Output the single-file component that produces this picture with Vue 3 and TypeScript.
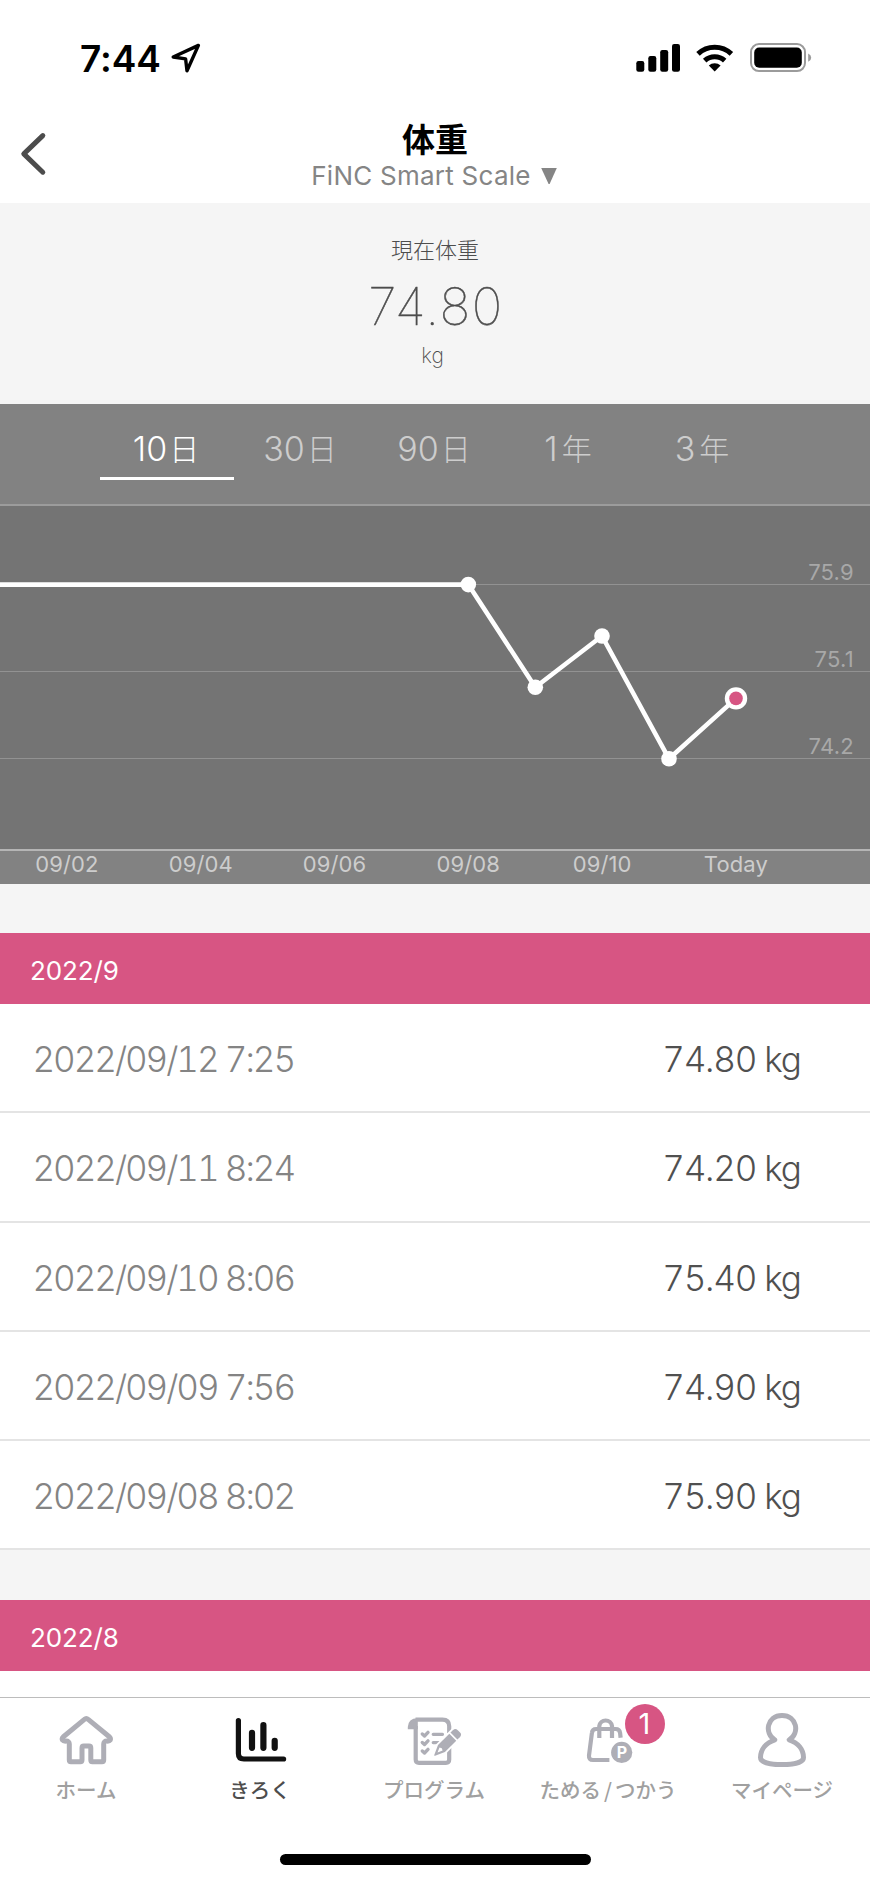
<script setup lang="ts">
interface Point { x: number; y: number }
interface Entry { date: string; weight: string }

const ranges: { num: string; unit: string }[] = [
  { num: '10', unit: '日' },
  { num: '30', unit: '日' },
  { num: '90', unit: '日' },
  { num: '1', unit: '年' },
  { num: '3', unit: '年' },
]
const gridLines = [
  { y: 79, label: '75.9' },
  { y: 166, label: '75.1' },
  { y: 253, label: '74.2' },
]
const points: Point[] = [
  { x: 468.3, y: 78.6 },
  { x: 535.3, y: 181.2 },
  { x: 602, y: 130 },
  { x: 669, y: 252.8 },
]
const today: Point = { x: 736, y: 192.4 }
const line = [{ x: -5, y: 78.6 }, ...points, today].map((p) => `${p.x},${p.y}`).join(' ')
const days = ['09/02', '09/04', '09/06', '09/08', '09/10', 'Today']
const entries: Entry[] = [
  { date: '2022/09/12 7:25', weight: '74.80 kg' },
  { date: '2022/09/11 8:24', weight: '74.20 kg' },
  { date: '2022/09/10 8:06', weight: '75.40 kg' },
  { date: '2022/09/09 7:56', weight: '74.90 kg' },
  { date: '2022/09/08 8:02', weight: '75.90 kg' },
]
</script>

<template>
  <div class="screen">
    <div class="status">
      <span class="time">7:44</span>
      <svg class="loc" width="34" height="34" viewBox="169 41 34 34">
        <path d="M173.2 57 L198.4 45.4 L187 70.7 L185.6 58.9 Z" fill="none" stroke="#000" stroke-width="3.4" stroke-linejoin="round" />
      </svg>
      <svg class="signals" width="180" height="36" viewBox="634 40 180 36">
        <rect x="636.3" y="61" width="8" height="10.8" rx="2.2" />
        <rect x="648.3" y="56" width="8" height="15.8" rx="2.2" />
        <rect x="660.2" y="50" width="8" height="21.8" rx="2.2" />
        <rect x="672" y="44" width="8" height="27.8" rx="2.2" />
        <g fill="none" stroke="#000" stroke-width="5">
          <path d="M698 53.9 A24.2 24.2 0 0 1 731.4 53.9" />
          <path d="M704.7 60.6 A14.6 14.6 0 0 1 724.7 60.6" />
        </g>
        <path d="M708.8 65.6 A8.8 8.8 0 0 1 720.6 65.6 L714.7 71.6 Z" />
        <rect x="751" y="44.1" width="54" height="27" rx="8" fill="none" stroke="#9b9b9b" stroke-width="2" />
        <rect x="754.2" y="47.5" width="47.6" height="20.3" rx="5" />
        <path d="M808.2 53.6 Q811.2 55 811.2 57.7 Q811.2 60.4 808.2 61.8 Z" fill="#9b9b9b" />
      </svg>
    </div>

    <header class="header">
      <svg class="back" width="30" height="50" viewBox="18 128 30 50">
        <path d="M42.8 135.6 L23.8 153.9 L42.8 172.2" fill="none" stroke="#4c4c4c" stroke-width="5" stroke-linecap="round" stroke-linejoin="round" />
      </svg>
      <h1>体重</h1>
      <div class="device">
        <span>FiNC Smart Scale</span>
        <svg width="18" height="18" viewBox="0 0 18 18"><path d="M1.2 1 H16.8 L9.6 17 H8.6 Z" fill="#858585" /></svg>
      </div>
    </header>

    <section class="current">
      <div class="caption">現在体重</div>
      <div class="value">74.80</div>
      <div class="unit">kg</div>
    </section>

    <nav class="ranges">
      <button v-for="(r, i) in ranges" :key="r.num" :class="{ active: i === 0, year: r.unit === '年' }">
        <span>{{ r.num }}</span><span class="kanji">{{ r.unit }}</span>
      </button>
    </nav>

    <svg class="chart" width="870" height="343" viewBox="0 0 870 343">
      <g v-for="g in gridLines" :key="g.label">
        <line x1="0" x2="870" :y1="g.y - 0.5" :y2="g.y - 0.5" stroke="#929292" />
        <text x="853.8" :y="g.y - 5.2" text-anchor="end" class="grid-label">{{ g.label }}</text>
      </g>
      <polyline :points="line" fill="none" stroke="#fff" stroke-width="4.6" stroke-linejoin="round" />
      <circle v-for="p in points" :key="p.x" :cx="p.x" :cy="p.y" r="7.8" fill="#fff" />
      <circle :cx="today.x" :cy="today.y" r="11.2" fill="#fff" />
      <circle :cx="today.x" :cy="today.y" r="6.8" fill="#d75583" />
    </svg>
    <div class="days"><span v-for="d in days" :key="d">{{ d }}</span></div>

    <h2 class="month">2022/9</h2>
    <ul class="list">
      <li v-for="e in entries" :key="e.date">
        <span class="date">{{ e.date }}</span>
        <span class="weight">{{ e.weight }}</span>
      </li>
    </ul>
    <h2 class="month">2022/8</h2>
    <div class="rest"></div>

    <footer class="tabs">
      <div class="tab">
        <svg width="174" height="72" viewBox="0 0 174 72">
          <path class="ln" d="M84.4 21.4 Q86.3 19.7 88.2 21.4 L109.3 38.8 Q111 40.6 110.2 42.1 Q109.4 43.3 107 43.1 Q103.7 43 103.7 46 V62 Q103.7 63.7 102 63.7 H92.4 Q90.8 63.7 90.8 62 V50 Q90.8 48.1 89 48.1 H83.8 Q82 48.1 82 50 V62 Q82 63.7 80.3 63.7 H71 Q69.3 63.7 69.3 62 V46 Q69.3 43 66 43.1 Q63.4 43.3 62.5 42.1 Q61.6 40.6 63.4 38.8 Z" />
        </svg>
        <span>ホーム</span>
      </div>
      <div class="tab active">
        <svg width="174" height="72" viewBox="0 0 174 72">
          <g fill="none" stroke="#111" stroke-linecap="round" stroke-linejoin="round">
            <path d="M64.4 22.6 V55.5 Q64.4 61 69.9 61 H109.6" stroke-width="5.2" />
            <path d="M78 34.8 V49.8 M89.4 27.2 V49.8 M100.7 42.8 V49.8" stroke-width="6.2" />
          </g>
        </svg>
        <span>きろく</span>
      </div>
      <div class="tab">
        <svg width="174" height="72" viewBox="0 0 174 72">
          <path d="M59.8 31.3 V29 Q60.3 20 69.8 20.2 V31.3 Z" fill="#aeaeb6" />
          <path class="ln scroll" d="M67.5 21.6 H94.5 Q101.2 21.6 101.2 28.3 V35 M101.2 50 V61.5 Q101.2 64.8 97.9 64.8 H71 Q67.7 64.8 67.7 61.5 V28" />
          <path class="ln check" d="M74.3 36 L76.5 38 L80 34.4 M74.3 44.5 L76.5 46.5 L80 42.9 M74.3 53 L76.5 55 L80 51.4" />
          <path class="ln thin" d="M85.2 36.3 H94.5 M85.2 44.6 H91" />
          <g transform="translate(86.4 57.6) rotate(-45)">
            <path d="M3 -4 L9 -6.8 H35.5 V6.8 H9 L3 4 Z" fill="#fff" />
            <path d="M0.4 -0.6 Q-0.4 0 0.4 0.6 L10 4.9 H26 V-4.9 H10 Z" fill="#aeaeb6" />
            <path d="M4.5 0 L9.4 -2.2 L10.5 0 L9.4 2.2 Z" fill="#fff" />
            <path d="M27.6 -4.9 H31 Q34.5 -4.9 34.5 -1.8 V1.8 Q34.5 4.9 31 4.9 H27.6 Z" fill="#aeaeb6" />
          </g>
        </svg>
        <span>プログラム</span>
      </div>
      <div class="tab">
        <svg width="174" height="72" viewBox="0 0 174 72">
          <path class="ln bag" d="M98.6 39.8 L98.1 35 Q97.6 31 93.6 31 H74.2 Q70.3 31 69.9 35 L67 57.4 Q66.6 62 71 62 H87.4" />
          <path class="ln bag" d="M77.3 40 V28 A6.4 6.3 0 0 1 90 28 V40" />
          <circle cx="99.7" cy="54.4" r="10.6" fill="#aeaeb6" />
          <text x="99.9" y="60.2" text-anchor="middle" class="point">P</text>
        </svg>
        <span class="spend">ためる<i>/</i>つかう</span>
        <b class="badge">1</b>
      </div>
      <div class="tab">
        <svg width="174" height="72" viewBox="0 0 174 72">
          <path class="ln" d="M78.8 41.8 C68 35.5 70.8 17.500 86 17.500 C101.200 17.500 104 35.500 93.200 41.800 C102 44.800 107.500 51.500 107.500 59.500 C107.500 64.500 98 66.600 86 66.600 C74 66.600 64.500 64.500 64.500 59.500 C64.500 51.500 70 44.800 78.800 41.800 Z" />
        </svg>
        <span>マイページ</span>
      </div>
      <div class="home-indicator"></div>
    </footer>
  </div>
</template>

<style>
body { margin: 0; background: #fff; }
</style>

<style scoped>
.screen {
  width: 870px; height: 1883px; overflow: hidden; background: #f5f5f5;
  display: flex; flex-direction: column;
  font-family: Inter, "Noto Sans CJK JP", sans-serif;
}
.screen > * { flex-shrink: 0; box-sizing: border-box; }
.status { height: 116px; background: #fff; display: flex; align-items: flex-start; padding: 40px 56px 0 80px; }
.time { font-size: 37px; font-weight: 600; line-height: 37px; width: 89px; white-space: nowrap; letter-spacing: -0.1px; }
.loc { margin-top: 1px; }
.signals { margin-left: auto; }
.header {
  height: 87px; background: #fff; display: grid; position: relative;
  grid-template-rows: 45px 30px; justify-items: center;
}
.back { position: absolute; left: 18px; top: 12px; }
h1 { margin: 0; font-size: 33px; line-height: 48px; font-weight: 700; }
.device { display: flex; align-items: center; gap: 9px; color: #858585; font-size: 26px; font-weight: 400; line-height: 30px; letter-spacing: 0.25px; margin-left: -1px; }
.current { height: 201px; display: flex; flex-direction: column; align-items: center; color: #4d4d4d; }
.caption { margin-top: 28px; font-size: 22px; line-height: 34px; font-weight: 300; font-family: "Noto Sans CJK JP", sans-serif; }
.value { margin-top: 13px; font-size: 51.5px; line-height: 56px; font-weight: 100; letter-spacing: 1.5px; margin-left: 2px; -webkit-text-stroke: 0.5px #4d4d4d; }
.unit { margin-top: 9px; font-size: 21px; line-height: 26px; font-weight: 200; margin-left: -5px; }
.ranges {
  height: 102px; background: #828282; border-bottom: 2px solid #9c9c9c;
  display: flex; padding-left: 100px;
}
.ranges button {
  box-sizing: border-box; width: 134px; height: 76px; padding: 15px 2px 0 0; border: 0;
  border-bottom: 3px solid transparent; background: none; color: #cdcdcd; font: 34px/60px Inter, sans-serif;
  font-weight: 300; display: flex; justify-content: center;
}
.ranges button.active { color: #fff; border-bottom-color: #fff; }
.kanji { font: 300 30px/60px "Noto Sans CJK JP", sans-serif; margin: -2px 0 0 2px; }
.year .kanji { margin-left: 4px; }
.chart { display: block; background: #747474; }
.grid-label { font-size: 22px; font-weight: 400; fill: #a8a8a8; letter-spacing: 0.2px; }
.days { height: 35px; margin-bottom: 49px; background: #828282; border-top: 2px solid #b5b5b5; display: flex; }
.days span { width: 133.8px; text-align: center; color: #cdcdcd; font-size: 22px; font-weight: 400; line-height: 26px; letter-spacing: 0.1px; }
.month { margin: 0; height: 71px; padding: 3px 0 0 30px; background: #d75583; color: #fff; font-size: 26px; font-weight: 400; line-height: 69px; letter-spacing: -0.1px; }
.list { list-style: none; margin: 0 0 50px; padding: 0; background: #fff; }
.list li {
  box-sizing: border-box; height: 109.3px; border-bottom: 2px solid #e4e4e4; padding: 3px 69.5px 0 32.5px;
  display: flex; justify-content: space-between; align-items: center; font-size: 35px; font-weight: 300;
  font-feature-settings: "tnum";
}
.date { color: #848484; letter-spacing: -2.05px; }
.weight { color: #505050; letter-spacing: -1.25px; }
.rest { height: 26px; background: #fff; }
.tabs { height: 186px; flex: none; background: #fff; border-top: 1px solid #bcbcbc; display: flex; position: relative; }
.tab {
  width: 174px; display: flex; flex-direction: column; align-items: center; position: relative;
  color: #a0a0a0; font: 500 20.5px/36px "Noto Sans CJK JP", sans-serif;
}
.tab.active { color: #4d4d4d; }
.tab > span { margin: 1px 2px 0 0; white-space: nowrap; }
.spend i { font-style: normal; margin: 0 3px; }
.ln { fill: none; stroke: #aeaeb6; stroke-width: 5; stroke-linejoin: round; stroke-linecap: round; }
.scroll { stroke-width: 4.2; stroke-linecap: butt; }
.check { stroke-width: 3.4; }
.thin { stroke-width: 3.2; }
.bag { stroke-width: 4.2; stroke-linecap: butt; }
.point { font: 700 16px Inter, sans-serif; fill: #fff; }
.badge {
  position: absolute; left: 103px; top: 6px; width: 40px; height: 40px; border-radius: 50%;
  background: #d75583; color: #fff; text-align: center; font: 400 29px/40px Inter, sans-serif; text-indent: -1px;
}
.home-indicator { position: absolute; left: 280px; top: 156px; width: 311px; height: 11px; border-radius: 6px; background: #000; }
</style>
